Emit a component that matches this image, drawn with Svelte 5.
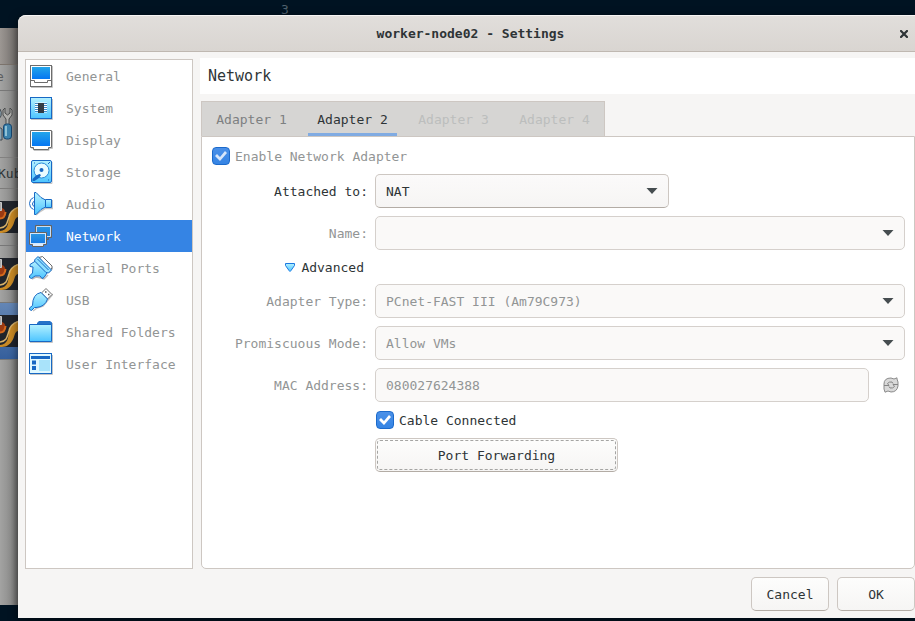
<script>
  const pages = ['General', 'System', 'Display', 'Storage', 'Audio', 'Network', 'Serial Ports', 'USB', 'Shared Folders', 'User Interface'];
  const adapters = [
    { name: 'Adapter 1', disabled: false },
    { name: 'Adapter 2', disabled: false },
    { name: 'Adapter 3', disabled: true },
    { name: 'Adapter 4', disabled: true }
  ];
  let page = $state('Network');
  let adapter = $state('Adapter 2');
  let cable = $state(true);
  let enabled = $state(true);
</script>

{#snippet thumb()}
  <svg class="thumb" width="18" height="32" viewBox="0 0 18 32" aria-hidden="true">
    <rect width="18" height="32" fill="#20242b" />
    <path d="M0 30C8 29 8 23 9 17C10 11 14 8 18 6V16C14 17 15 22 12 26C9 31 5 32 0 32Z" fill="#c98a25" />
    <path d="M0 27C7 26 7 22 9 16C10 11 14 8 18 6.5" fill="none" stroke="#d9b269" stroke-width="1.5" />
    <circle cx="0" cy="12" r="5.5" fill="#9b3a12" />
    <path d="M0 17.500Q5 17.500 5.500 11" fill="none" stroke="#d56a1d" stroke-width="2" />
    <path d="M0 1.500H1.500V9.500H0" fill="#aaa" stroke="#c8c8c8" />
  </svg>
{/snippet}

{#snippet arrow()}
  <svg class="arrow" width="12" height="6" viewBox="0 0 12 6" aria-hidden="true"><path d="M0.5 0H11.5L6 6Z" fill="#464d50" /></svg>
{/snippet}

{#snippet icon(name)}
  <svg width="24" height="24" viewBox="0 0 24 24" aria-hidden="true">
    {#if name === 'General'}
      <path d="M2 23.5H23.5V2" fill="none" stroke="#c4c4c4" />
      <rect x="1.5" y="1.5" width="21" height="21" fill="#fff" stroke="#6c6c6c" />
      <rect x="3" y="3" width="18" height="12" fill="url(#screen)" />
      <path d="M2 16.5H5.5V18.5H18.5V16.5H22" fill="none" stroke="#6c6c6c" />
    {:else if name === 'System'}
      <path d="M2 23.5H23.5V3" fill="none" stroke="#c4c4c4" />
      <rect x="1.5" y="1.5" width="21" height="21" fill="url(#sky)" stroke="#1768c4" />
      <path d="M6 7.5H18M6 9.5H18M6 11.5H18M6 13.5H18M6 15.5H18" stroke="#fff" stroke-width="2" />
      <path d="M6 7.5H18M6 9.5H18M6 11.5H18M6 13.5H18M6 15.5H18" stroke="#3e89c9" />
      <rect x="9" y="7" width="6" height="10" fill="#323b44" />
    {:else if name === 'Display'}
      <path d="M2.5 20.5H5V22.5H20V20.5H23.5V3" fill="none" stroke="#c4c4c4" />
      <path d="M1.5 2.5H22.5V19.5H19.5V21.5H4.5V19.5H1.5Z" fill="#fff" stroke="#6c6c6c" />
      <rect x="3" y="4" width="18" height="14" fill="url(#screen)" />
    {:else if name === 'Storage'}
      <path d="M4 23.5H23V2" fill="none" stroke="#c4c4c4" />
      <rect x="2.5" y="0.5" width="20" height="22" rx="1.5" fill="url(#sky)" stroke="#1768c4" />
      <circle cx="12.5" cy="10.5" r="7.5" fill="#e9fbff" stroke="#2589d8" />
      <circle cx="12.5" cy="10" r="2" fill="#1768c4" />
      <path d="M3.5 19L7 15.5L10.5 14L12 15L10 18L5.500 21H3.500Z" fill="#1768c4" />
      <path d="M19 4L21 2M19 20H20M5 3H6" stroke="#1768c4" />
    {:else if name === 'Audio'}
      <path d="M7 23L12 19L16 16.5H23.5V8" fill="none" stroke="#c4c4c4" stroke-width="1.5" />
      <path d="M5.5 0.500H7L12 5.500L16.500 8V15L12 17.500L7 22.500H5.500Z" fill="url(#sky)" stroke="#1768c4" stroke-linejoin="round" />
      <path d="M16.500 7.500H22.500V15.500H16.500Z" fill="url(#sky)" stroke="#1768c4" />
      <path d="M4.500 5.500Q0.500 7 0.500 11.500T4.500 17.500M5.500 9Q3.500 10 3.500 12T5.500 14.500" fill="none" stroke="#1768c4" />
    {:else if name === 'Network'}
      <path d="M6.500 1.500H22.500V13.500H19.500V15.500H9.500V13.500H6.500Z" fill="url(#steel)" stroke="#68635e" />
      <path d="M7.500 2.500H21.500V12.500H7.500Z" fill="none" stroke="#c9dff6" />
      <path d="M0.500 8.500H17.500V20.500H14.500V22.500H3.500V20.500H0.500Z" fill="#dcecff" stroke="#68635e" />
      <path d="M1.500 9.500H16.500V19.500H1.500Z" fill="url(#steel)" stroke="#d5e8fc" />
    {:else if name === 'Serial Ports'}
      <path d="M3 23L7 21L12 22L15 23L19 19M20 16L24 12" fill="none" stroke="#bababa" stroke-width="1.5" />
      <path d="M10 1.500L13.500 0.500L23 10V12L21 14Z" fill="#fff" stroke="#6c6c6c" />
      <path d="M6.500 5L1 8.500V10.500L4 11L3.500 17L0.500 20V21.500L2.500 22.500L6 20L11 20L13 22.500L15 21.500L18 17Z" fill="url(#sky)" stroke="#1768c4" stroke-linejoin="round" />
      <path d="M5.500 4L9 0.500L22.500 14L19.500 17L17 16.500L6 5.500Z" fill="#8fe0ff" stroke="#1768c4" stroke-linejoin="round" />
      <path d="M8.500 3L19.500 14" stroke="#1768c4" />
    {:else if name === 'USB'}
      <path d="M4 23L8 20L14 18L19 12L24 6" fill="none" stroke="#c4c4c4" stroke-width="1.5" />
      <path d="M17 0.5L23 6.5L18.5 11L12.5 5Z" fill="#fff" stroke="#6c6c6c" />
      <path d="M16 4H17.5M19 6.5H20.5" stroke="#555" stroke-width="1.5" />
      <path d="M12 4.500L18.500 11Q16 19 7 19.500H5.500L2.500 22.500L0.500 21.500V20L3.500 17.500Q3.500 6 12 4.500Z" fill="url(#sky)" stroke="#1768c4" />
    {:else if name === 'Shared Folders'}
      <path d="M1 22.5H23.5V3" fill="none" stroke="#c4c4c4" />
      <path d="M8 4V3L10 1H21L23 2.500V5H8Z" fill="#2672c8" />
      <path d="M0.5 4.5H22.5V21.5H0.5Z" fill="url(#sky)" stroke="#1768c4" />
    {:else}
      <path d="M1 22.5H23.5V3" fill="none" stroke="#c4c4c4" />
      <rect x="0.5" y="1.5" width="22" height="20" fill="#dff8ff" stroke="#1768c4" />
      <path d="M2 4H21V7H2ZM3 8.5H7V12.5H3ZM3 14H7V18H3Z" fill="#1768c4" />
      <rect x="10" y="8" width="11" height="11" fill="#a9e3fa" />
    {/if}
  </svg>
{/snippet}

<svg class="defs" width="0" height="0" aria-hidden="true">
  <defs>
    <linearGradient id="screen" x1="0" y1="0" x2="0" y2="1"><stop stop-color="#23a5ea" /><stop offset="1" stop-color="#0576f2" /></linearGradient>
    <linearGradient id="steel" x1="0" y1="0" x2="0" y2="1"><stop stop-color="#2c97e2" /><stop offset="1" stop-color="#177ae4" /></linearGradient>
    <linearGradient id="sky" x1="0" y1="0" x2="0" y2="1"><stop stop-color="#b5f1ff" /><stop offset="1" stop-color="#4cc4ff" /></linearGradient>
  </defs>
</svg>

<div class="desktop">
  <div class="above">3</div>
  <div class="windows">
    <div class="behind">
      <div class="b-title"></div>
      <div class="b-menu">e</div>
      <div class="b-tools">
        <svg width="14" height="34" viewBox="0 0 14 34" aria-hidden="true">
          <path d="M0 2Q2 5 1 9L-1 12V20L2 22V33H-2" fill="#8ca6b5" stroke="#454b50" />
          <path d="M5 1L3 3V8L6 12V18H9V12L12 8V3L10 1V6L7.5 8L5 6Z" fill="#b0b0ad" stroke="#4b4c4c" />
          <rect x="3.5" y="17" width="8" height="15" rx="3" fill="#3c83ad" stroke="#184770" />
          <path d="M6 19V29" stroke="#8fc1d7" stroke-width="2" />
        </svg>
      </div>
      <div class="b-group">Kub</div>
      <div class="b-row">{@render thumb()}</div>
      <div class="b-row">{@render thumb()}</div>
      <div class="b-row current">{@render thumb()}</div>
    </div>

    <main class="dialog">
      <header>
        <h1>worker-node02 - Settings</h1>
        <button class="close" aria-label="Close">
          <svg width="8" height="8" viewBox="0 0 8 8"><path d="M1 1L7 7M7 1L1 7" stroke="#2e3436" stroke-width="2.2" stroke-linecap="square" /></svg>
        </button>
      </header>

      <div class="body">
        <nav aria-label="Settings pages">
          {#each pages as name}
            <button class:selected={page === name} onclick={() => (page = name)}>
              {@render icon(name)}<span>{name}</span>
            </button>
          {/each}
        </nav>

        <section class="content">
          <h2>{page}</h2>
          <div class="tabs" role="tablist">
            {#each adapters as tab}
              <button role="tab" aria-selected={adapter === tab.name} disabled={tab.disabled} onclick={() => (adapter = tab.name)}>{tab.name}</button>
            {/each}
          </div>
          <form class="panel" onsubmit={(e) => e.preventDefault()}>
            <label class="check enable dim"><input type="checkbox" bind:checked={enabled} />Enable Network Adapter</label>

            <label class="name" for="attached">Attached to:</label>
            <div class="combo short">
              <select id="attached"><option>NAT</option><option>Bridged Adapter</option></select>{@render arrow()}
            </div>

            <label class="name dim" for="net">Name:</label>
            <div class="combo"><select id="net" disabled><option></option></select>{@render arrow()}</div>

            <button type="button" class="advanced" aria-expanded="true">
              <svg width="10" height="9" viewBox="0 0 10 9" aria-hidden="true"><path d="M0.5 0.5H9.5V2.5L6 7.5L5 8.5L4 7.5L0.5 2.5Z" fill="url(#sky)" stroke="#1b78e0" /></svg>
              Advanced
            </button>

            <label class="name dim" for="type">Adapter Type:</label>
            <div class="combo"><select id="type" disabled><option>PCnet-FAST III (Am79C973)</option></select>{@render arrow()}</div>

            <label class="name dim" for="mode">Promiscuous Mode:</label>
            <div class="combo"><select id="mode" disabled><option>Allow VMs</option></select>{@render arrow()}</div>

            <label class="name dim" for="mac">MAC Address:</label>
            <div class="mac">
              <input id="mac" type="text" value="080027624388" disabled />
              <button type="button" aria-label="Generate a new MAC address" disabled>
                <svg width="16" height="16" viewBox="0 0 16 16">
                  <path d="M1 7Q1 1 8 1L11 2L14 0.8V2L15 5V9Q14 15 8 15L5 14L2 15.2L1 12Z" fill="#d9d9d9" stroke="#8b8b8b" />
                  <path d="M1 8.500H6L4.500 6.500Q6 4.500 9 5L10 6.500M15 7.500H10L11.500 9.500Q10 11.500 7 11L6 9.500" fill="none" stroke="#858585" />
                </svg>
              </button>
            </div>

            <label class="check cable"><input type="checkbox" bind:checked={cable} />Cable Connected</label>
            <button type="button" class="btn forward">Port Forwarding</button>
          </form>
        </section>
      </div>

      <footer>
        <button class="btn">Cancel</button>
        <button class="btn">OK</button>
      </footer>
    </main>
  </div>
</div>

<style>
  :global(body) { margin: 0; background: #001120; }
  * { box-sizing: border-box; }
  .defs { position: absolute; }
  .desktop, button, select, input { font-family: 'DejaVu Sans Mono', monospace; font-size: 13px; }
  button { margin: 0; padding: 0; border: 0; background: none; color: inherit; }
  .desktop { min-height: 100vh; display: flex; flex-direction: column; padding-bottom: 3px; background: #001322; color: #2e3436; overflow: hidden; }
  .above { height: 15px; padding: 2px 0 0 281px; line-height: 15px; color: #4f606d; }
  .windows { flex: 1; display: flex; }

  .behind { flex: none; width: 18px; margin: 13px 0; overflow: hidden; background: linear-gradient(90deg, #a3a3a2, #8e8e8d 60%, #6f6f6e); line-height: 24px; }
  .b-title { height: 37px; background: linear-gradient(90deg, #9c9793, #6e6a67); border-bottom: 1px solid #7b736c; }
  .b-menu { height: 26px; margin-left: -4px; color: #5c5e5e; border-bottom: 1px solid #777; }
  .b-tools { height: 67px; padding-top: 16px; border-bottom: 1px solid #828180; }
  .b-group { height: 31px; padding-top: 4px; margin-left: -2px; border-bottom: 1px solid #7d7c7b; }
  .b-row { height: 57px; padding-top: 12px; border-bottom: 1px solid #777; }
  .current { background: linear-gradient(#6486b5, #355f9c); }
  .thumb { display: block; }

  .dialog { flex: 1; min-width: 0; display: flex; flex-direction: column; background: #f6f5f4; border-top-left-radius: 8px; box-shadow: 0 2px 10px rgba(0, 0, 0, 0.6); }
  header { flex: none; height: 37px; display: flex; align-items: center; padding-right: 7px; border-top: 1px solid #f7f5f4; border-bottom: 1px solid #bfb8b1; border-top-left-radius: 8px; background: linear-gradient(#e1dedb, #d9d5d1); }
  h1 { flex: 1; margin: 0; padding-left: 23px; font-size: 13px; line-height: 20px; text-align: center; }
  .close { width: 8px; height: 20px; display: flex; align-items: center; }

  .body { flex: 1; display: flex; gap: 7px; padding: 6px 0 8px 7px; }
  nav { flex: none; width: 168px; margin-top: 1px; border: 1px solid #cdc7c2; background: #fff; }
  nav button { display: flex; align-items: center; gap: 13px; width: 100%; height: 32px; padding-left: 3px; color: #929595; text-align: left; }
  nav .selected { background: #3584e4; color: #fff; }

  .content { flex: 1; min-width: 0; display: flex; flex-direction: column; align-items: flex-start; }
  h2 { align-self: stretch; margin: 0 0 7px; padding-left: 8px; background: #fff; font-size: 15px; font-weight: 400; line-height: 36px; }
  .tabs { display: flex; gap: 12px; height: 35px; margin-left: 1px; padding: 0 5px; border: 1px solid #cdc7c2; border-bottom: 0; background: #d6d5d3; }
  .tabs button { width: 89px; padding-top: 3px; border-bottom: 3px solid transparent; color: #7d8081; }
  .tabs button[aria-selected='true'] { border-color: #80abe2; color: #2e3436; }
  .tabs button:disabled { color: #bcbebd; }

  .panel { flex: 1; align-self: stretch; display: grid; grid-template-columns: 156px minmax(0, 1fr); align-content: start; align-items: center; gap: 8px 7px; margin-left: 1px; padding: 9px 9px 9px 10px; border: 1px solid #cdc7c2; border-bottom-right-radius: 5px; border-bottom-left-radius: 5px; background: #fff; }
  .name { grid-column: 1; text-align: right; }
  .dim { color: #929595; }
  .check { display: flex; align-items: center; gap: 5px; height: 20px; }
  .enable { grid-column: 1 / -1; }
  .cable { grid-column: 2; padding-left: 1px; }
  .check input { appearance: none; flex: none; width: 18px; height: 18px; margin: 0; border: 1px solid #1b6acb; border-radius: 4px; background: #fff; }
  .check input:checked { background: linear-gradient(#4a90e8, #3584e4); }
  .check input:checked::after { content: ''; display: block; width: 16px; height: 16px; background: #fff; clip-path: polygon(2px 8px, 4px 6px, 7px 9px, 12px 3px, 14px 5px, 7px 13px); }
  .enable input:checked::after { background: #d7e6fa; }

  .combo { position: relative; }
  .short { width: 294px; }
  select, .mac input { appearance: none; display: block; width: 100%; height: 34px; margin: 0; padding: 0 30px 0 10px; border: 1px solid #cdc7c2; border-bottom-color: #b3aca5; border-radius: 5px; background: linear-gradient(#fbfafa, #f6f5f4); color: #2e3436; }
  select:disabled, .mac input { border-color: #d5d0cc; background: #faf9f8; color: #929595; opacity: 1; }
  .arrow { position: absolute; right: 11px; top: 14px; pointer-events: none; }
  .advanced { grid-column: 1; justify-self: end; display: flex; align-items: center; gap: 6px; height: 18px; margin-right: 4px; }
  .mac { display: flex; align-items: center; gap: 8px; }
  .mac input { flex: 1; min-width: 0; }
  .mac button { display: flex; justify-content: center; width: 28px; }

  .btn { height: 34px; border: 1px solid #cdc7c2; border-bottom-color: #b3aca5; border-radius: 5px; background: linear-gradient(#fdfdfc, #f6f5f4); }
  .forward { grid-column: 2; justify-self: start; width: 243px; outline: 1px dashed #a5a5a3; outline-offset: -3px; }
  footer { flex: none; display: flex; justify-content: flex-end; gap: 8px; padding-bottom: 7px; }
  footer .btn { width: 78px; }
</style>
